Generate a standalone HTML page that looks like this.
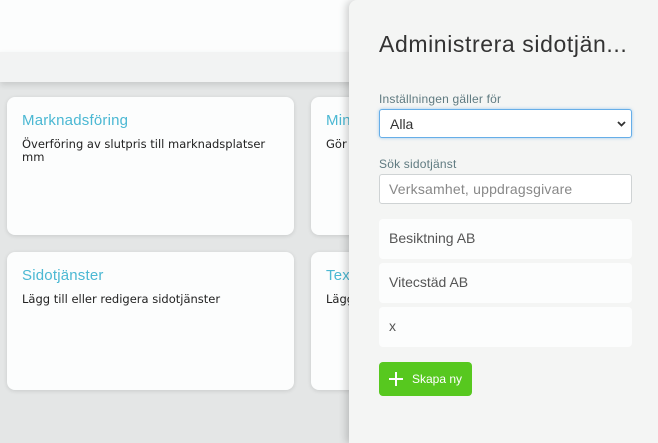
<!DOCTYPE html>
<html><head><style>
*{box-sizing:border-box;margin:0;padding:0}
body{width:658px;height:443px;overflow:hidden;background:#e4e6e6;font-family:"Liberation Sans","DejaVu Sans",sans-serif;position:relative}
.hdr{position:absolute;left:0;top:0;width:658px;height:52px;background:#fcfdfd}
.strip{position:absolute;left:0;top:52px;width:658px;height:30px;background:#f2f3f3;box-shadow:0 3px 6px rgba(0,0,0,.12)}
.card{position:absolute;width:287px;height:138px;background:#fcfdfd;border-radius:8px;box-shadow:0 1px 4px rgba(0,0,0,.12);padding:15px 15px}
.card h3{font-weight:normal;font-size:15px;color:#4bb8d3;margin-bottom:9px;letter-spacing:.2px}
.card p{font-size:12px;color:#222;line-height:13px;font-family:"DejaVu Sans",sans-serif;font-size:11.5px;padding-right:10px}
.panel{position:absolute;left:349px;top:0;width:309px;height:443px;background:#f4f5f4;box-shadow:-3px 0 8px rgba(0,0,0,.18);border-top-left-radius:8px}
.title{position:absolute;left:30px;top:31px;font-size:23px;color:#333;white-space:nowrap;letter-spacing:.6px}
.lbl{position:absolute;left:30px;font-size:12px;color:#5f7a80;letter-spacing:.2px}
.sel{position:absolute;left:30px;top:109px;width:253px;height:29px;background:#fff;border:1px solid #66aee8;border-radius:3px;box-shadow:0 0 3px rgba(102,174,232,.6);font-size:14px;color:#333;padding:6px 10px}
.inp{position:absolute;left:30px;top:174px;width:253px;height:30px;background:#fff;border:1px solid #cfd3d4;border-radius:3px;font-size:14px;color:#888;padding:6px 9px;letter-spacing:.2px}
.item{position:absolute;left:30px;width:253px;height:40px;background:#fcfdfd;border-radius:4px;font-size:14px;color:#555;padding:11px 10px}
.btn{position:absolute;left:30px;top:362px;width:93px;height:34px;background:#57c81f;border-radius:4px;color:#fff;font-size:12px;padding:10px 0 0 9px}
</style></head><body>
<div class="hdr"></div><div class="strip"></div>
<div class="card" style="left:7px;top:97px"><h3>Marknadsföring</h3><p>Överföring av slutpris till marknadsplatser mm</p></div>
<div class="card" style="left:311px;top:97px"><h3>Mina</h3><p>Gör</p></div>
<div class="card" style="left:7px;top:252px"><h3>Sidotjänster</h3><p>Lägg till eller redigera sidotjänster</p></div>
<div class="card" style="left:311px;top:252px"><h3>Text</h3><p>Lägg</p></div>
<div class="panel">
<div class="title">Administrera sidotjän...</div>
<div class="lbl" style="top:92px">Inställningen gäller för</div>
<div class="sel">Alla<svg style="position:absolute;right:5px;top:11px" width="9" height="6" viewBox="0 0 9 6"><path d="M1 1l3.5 3.5L8 1" stroke="#333" stroke-width="1.8" fill="none"/></svg></div>
<div class="lbl" style="top:157px">Sök sidotjänst</div>
<div class="inp">Verksamhet, uppdragsgivare</div>
<div class="item" style="top:219px">Besiktning AB</div>
<div class="item" style="top:263px">Vitecstäd AB</div>
<div class="item" style="top:307px">x</div>
<div class="btn"><svg style="position:absolute;left:10px;top:10px" width="14" height="14" viewBox="0 0 14 14"><path d="M7 0v14M0 7h14" stroke="#fff" stroke-width="2"/></svg><span style="margin-left:24px">Skapa ny</span></div>
</div>
</body></html>
